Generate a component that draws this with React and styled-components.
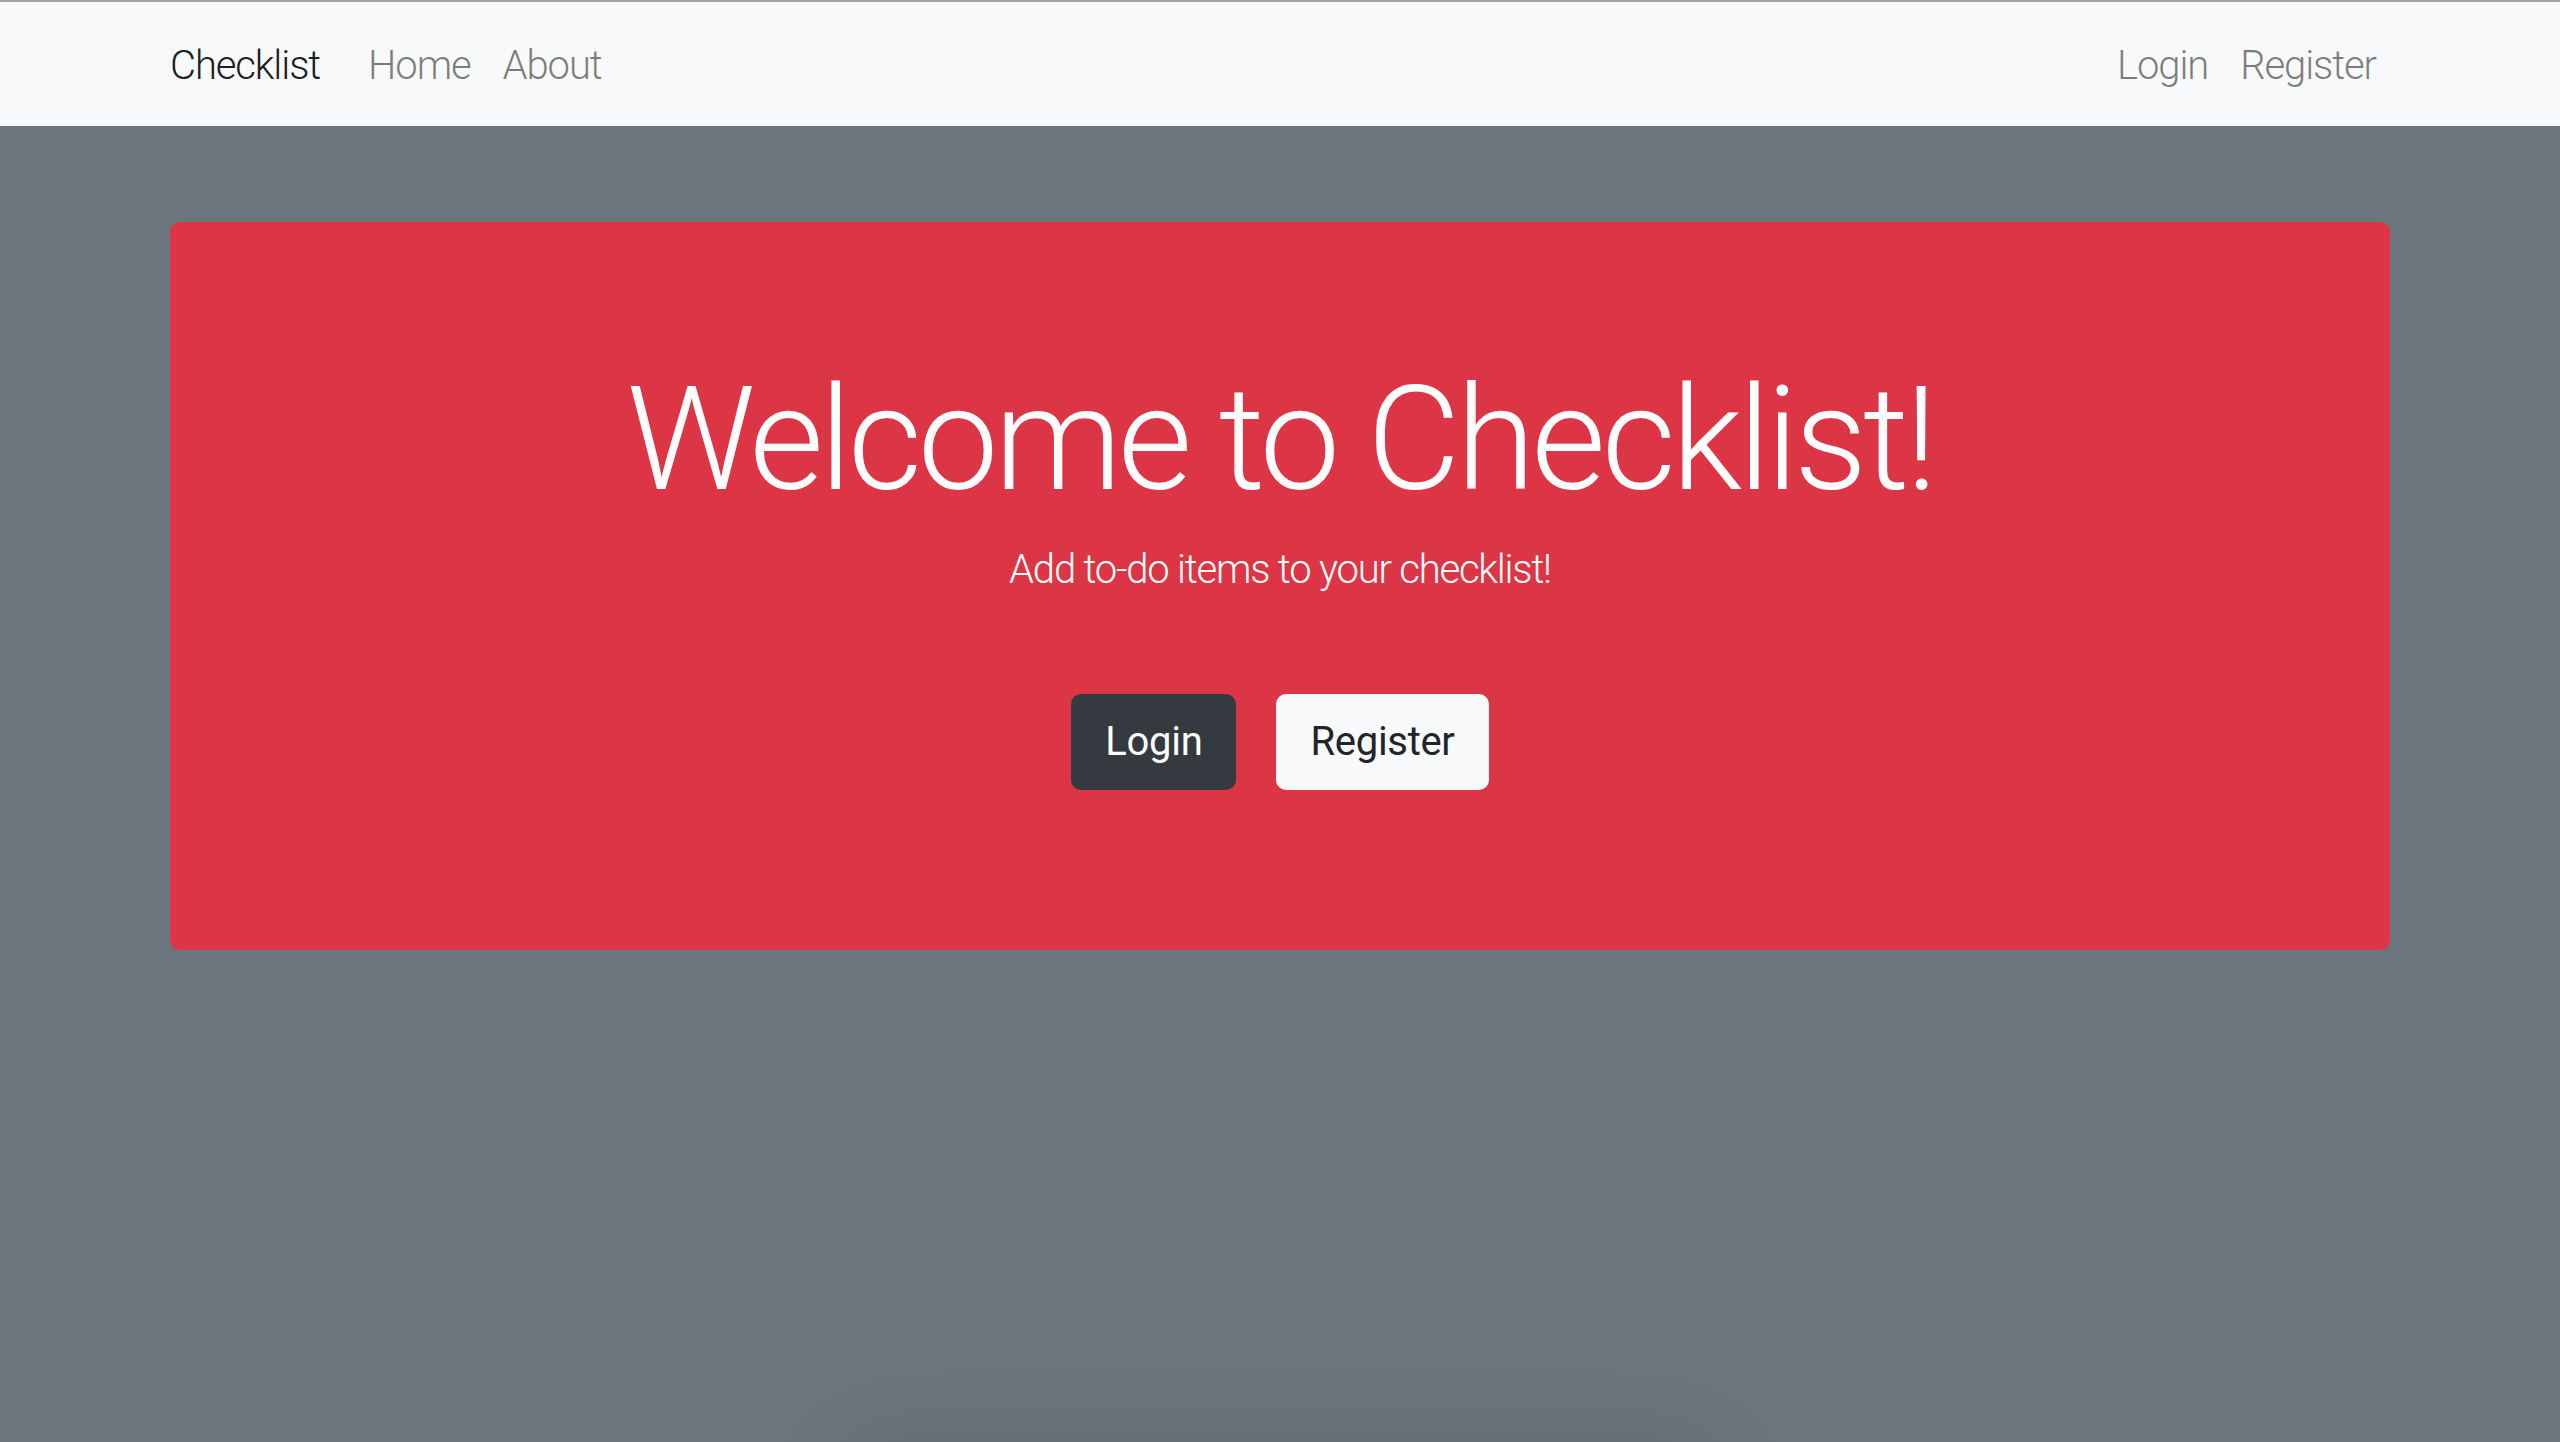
import React from 'react'
import styled, { createGlobalStyle } from 'styled-components'

const GlobalStyle = createGlobalStyle`
  html, body {
    margin: 0;
    padding: 0;
    background: #6c757d;
    font-family: Roboto, 'Liberation Sans', sans-serif;
  }
  * {
    box-sizing: border-box;
  }
`

const Page = styled.div`
  height: 100vh;
  overflow: hidden;
  background: #6c757d;
`

const Navbar = styled.nav`
  height: 126px;
  padding-top: 3px;
  background: #f8f9fa;
  border-top: 2px solid #a4a4a4;
`

const NavInner = styled.div`
  width: 2220px;
  height: 100%;
  margin: 0 auto;
  display: flex;
  align-items: center;
`

const Brand = styled.a`
  font-size: 40px;
  line-height: 60px;
  font-weight: 300;
  letter-spacing: -1.1px;
  color: rgba(0, 0, 0, 0.9);
  margin-right: 32px;
  text-decoration: none;
`

const NavGroup = styled.div`
  display: flex;
  align-items: center;
  margin-left: ${(p) => (p.right ? 'auto' : '0')};
  margin-right: ${(p) => (p.right ? '-2px' : '0')};
`

const NavLink = styled.a`
  font-size: 40px;
  line-height: 60px;
  font-weight: 300;
  letter-spacing: -1.1px;
  color: rgba(0, 0, 0, 0.5);
  padding: 0 16px;
  text-decoration: none;
`

const Jumbotron = styled.section`
  width: 2220px;
  margin: 96px auto 0;
  padding: 132px 64px 160px;
  background: #dc3545;
  border-radius: 10px;
  text-align: center;
  color: #fff;
`

const Title = styled.h1`
  margin: 0;
  font-size: 144px;
  line-height: 1.2;
  font-weight: 300;
  letter-spacing: -4.2px;
`

const Lead = styled.p`
  margin: 13px 0 0;
  font-size: 40px;
  line-height: 60px;
  font-weight: 300;
  letter-spacing: -1.2px;
`

const Actions = styled.div`
  margin-top: 94px;
  display: flex;
  justify-content: center;
  gap: 40px;
`

const Button = styled.a`
  display: inline-block;
  font-size: 40px;
  line-height: 60px;
  font-weight: 400;
  letter-spacing: -0.3px;
  padding: 16px 32px;
  border: 2px solid ${(p) => (p.dark ? '#343a40' : '#f8f9fa')};
  border-radius: 10px;
  background: ${(p) => (p.dark ? '#343a40' : '#f8f9fa')};
  color: ${(p) => (p.dark ? '#fff' : '#212529')};
  text-decoration: none;
`

const Card = styled.div`
  width: 826px;
  height: 400px;
  margin: 492px auto 0;
  background: #343a40;
  border-radius: 10px;
  box-shadow: 0 32px 96px rgba(0, 0, 0, 0.25);
`

export default function App() {
  return (
    <Page>
      <GlobalStyle />
      <Navbar>
        <NavInner>
          <Brand href="#">Checklist</Brand>
          <NavGroup>
            <NavLink href="#">Home</NavLink>
            <NavLink href="#">About</NavLink>
          </NavGroup>
          <NavGroup right>
            <NavLink href="#">Login</NavLink>
            <NavLink href="#">Register</NavLink>
          </NavGroup>
        </NavInner>
      </Navbar>
      <Jumbotron>
        <Title>Welcome to Checklist!</Title>
        <Lead>Add to-do items to your checklist!</Lead>
        <Actions>
          <Button href="#" dark>Login</Button>
          <Button href="#">Register</Button>
        </Actions>
      </Jumbotron>
      <Card />
    </Page>
  )
}
